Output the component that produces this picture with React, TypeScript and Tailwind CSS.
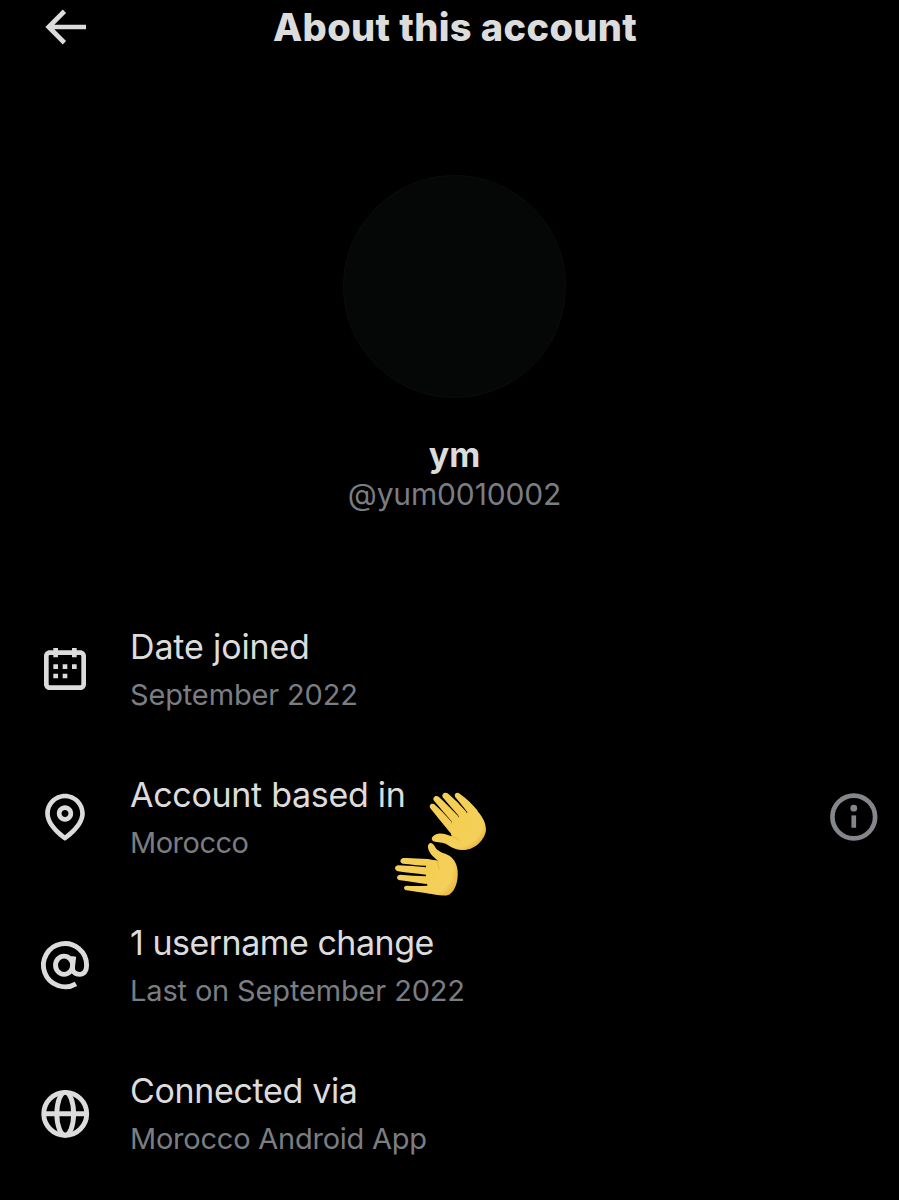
import type { ReactNode } from 'react'

type Row = {
  title: string
  detail: string
  icon: ReactNode
  titleClass: string
  detailClass: string
  info?: boolean
}

const rows: Row[] = [
  {
    title: 'Date joined',
    detail: 'September 2022',
    icon: <CalendarIcon />,
    titleClass: 'tracking-[-0.15px]',
    detailClass: 'tracking-[-0.15px]',
  },
  {
    title: 'Account based in',
    detail: 'Morocco',
    icon: <PinIcon />,
    titleClass: 'tracking-[-0.3px]',
    detailClass: 'tracking-[-0.5px]',
    info: true,
  },
  {
    title: '1 username change',
    detail: 'Last on September 2022',
    icon: <AtIcon />,
    titleClass: 'tracking-[-0.5px]',
    detailClass: 'tracking-[-0.15px]',
  },
  {
    title: 'Connected via',
    detail: 'Morocco Android App',
    icon: <GlobeIcon />,
    titleClass: 'tracking-[-0.35px]',
    detailClass: 'tracking-[-0.23px]',
  },
]

function CalendarIcon() {
  return (
    <svg viewBox="0 0 24 24" className="size-14" fill="currentColor">
      <path d="M7 4V3h2v1h6V3h2v1h1.5C19.89 4 21 5.12 21 6.5v12c0 1.38-1.11 2.5-2.5 2.5h-13C4.12 21 3 19.88 3 18.5v-12C3 5.12 4.12 4 5.5 4H7zm0 2H5.5c-.27 0-.5.22-.5.5v12c0 .28.23.5.5.5h13c.28 0 .5-.22.5-.5v-12c0-.28-.22-.5-.5-.5H17v1h-2V6H9v1H7V6zm0 6h2v-2H7v2zm0 4h2v-2H7v2zm4-4h2v-2h-2v2zm0 4h2v-2h-2v2zm4-4h2v-2h-2v2z" />
    </svg>
  )
}

function PinIcon() {
  return (
    <svg viewBox="0 0 24 24" className="size-14" fill="currentColor">
      <path d="M12 7c-1.93 0-3.5 1.57-3.5 3.5S10.07 14 12 14s3.5-1.57 3.5-3.5S13.93 7 12 7zm0 5c-.827 0-1.5-.673-1.5-1.5S11.173 9 12 9s1.5.673 1.5 1.5S12.827 12 12 12zm0-10c-4.687 0-8.5 3.813-8.5 8.5 0 5.967 7.621 11.116 7.945 11.332l.555.37.555-.37c.324-.216 7.945-5.365 7.945-11.332C20.5 5.813 16.687 2 12 2zm0 17.77c-1.665-1.241-6.5-5.196-6.5-9.27C5.5 6.916 8.416 4 12 4s6.5 2.916 6.5 6.5c0 4.073-4.835 8.028-6.5 9.27z" />
    </svg>
  )
}

function AtIcon() {
  return (
    <svg viewBox="0 0 24 24" className="size-14" fill="none" stroke="currentColor" strokeWidth="2.1">
      <path d="M16.7 20.05A9.25 9.25 0 1 1 21.25 12.1c0 2.4-1 3.9-2.9 3.9-2.3 0-3.4-1.3-3.1-3.5l.5-4.2" />
      <ellipse cx="11.6" cy="12.1" rx="3.65" ry="3.9" />
    </svg>
  )
}

function GlobeIcon() {
  return (
    <svg viewBox="0 0 24 24" className="size-14" fill="none" stroke="currentColor" strokeWidth="2.1">
      <circle cx="12.1" cy="12.35" r="9.2" />
      <ellipse cx="12.1" cy="12.35" rx="3.6" ry="9.2" />
      <path d="M2.9 12.35h18.4" />
    </svg>
  )
}

function InfoIcon() {
  return (
    <svg viewBox="0 0 24 24" className="size-14" fill="none" stroke="currentColor" strokeWidth="2">
      <circle cx="11.9" cy="12" r="9.15" />
      <circle cx="11.9" cy="8.2" r="1.45" fill="currentColor" stroke="none" />
      <path d="M11.9 11.3v5.3" />
    </svg>
  )
}

function WavingHands() {
  return (
    <svg viewBox="0 0 360 390" className="absolute top-[780px] left-[380px] h-[130px] w-[120px]">
      <defs>
        <radialGradient id="upper" gradientUnits="userSpaceOnUse" cx="225" cy="115" r="115">
          <stop offset="0" stopColor="#f4ce50" />
          <stop offset="0.75" stopColor="#f5d05a" />
          <stop offset="1" stopColor="#dfa436" />
        </radialGradient>
        <radialGradient id="lower" gradientUnits="userSpaceOnUse" cx="135" cy="265" r="125">
          <stop offset="0" stopColor="#f4ce50" />
          <stop offset="0.65" stopColor="#f5d05a" />
          <stop offset="1" stopColor="#dfa436" />
        </radialGradient>
      </defs>
      {/* Upper hand: fingers, then palm with thumb */}
      <g fill="url(#upper)">
        <path d="M151 85C146 76 154 68 163 73C180 89 198 107 213 124L222 175L212 160C193 137 168 106 151 85Z" />
        <path d="M161 61C157 51 168 44 176 50C196 69 217 89 235 109L228 145L212 121C195 101 177 81 161 61Z" />
        <path d="M188 52C184 42 194 35 203 40C223 57 242 76 260 97L248 132L234 105C219 88 203 70 188 52Z" />
        <path d="M225 50C222 41 231 35 239 41C259 55 279 74 293 92L280 128L260 94C249 79 237 65 225 50Z" />
        <path d="M214 127L236 111L260 99L286 86C304 105 318 125 318 150C316 176 288 208 253 210C229 210 215 203 202 194C190 186 172 189 160 184C149 176 159 164 174 161C190 159 204 165 215 169C211 155 210 142 214 127Z" />
      </g>
      <path d="M217 168c6 5 14 6 22 14" fill="none" stroke="#e6b544" strokeWidth="3" />
      {/* Lower hand */}
      <g fill="url(#lower)">
        <path d="M71 234C92 233 119 236 143 237L176 243L160 258L138 257C116 256 92 253 69 251C58 249 59 235 71 234Z" />
        <path d="M54 256C82 257 110 260 138 262L162 270L138 284C109 281 80 278 54 274C42 271 42 258 54 256Z" />
        <path d="M60 284C86 286 112 288 138 289L162 299L138 312C110 308 84 304 60 301C48 299 48 286 60 284Z" />
        <path d="M80 317C100 318 120 318 141 317L162 325L150 341C126 338 101 334 79 331C69 328 70 318 80 317Z" />
        <path d="M139 240L175 242C160 232 142 214 144 197C148 184 159 189 164 199C171 214 187 218 202 224C218 231 231 247 233 273C235 303 226 334 207 344C191 350 165 344 143 339L142 317L138 290L138 262Z" />
      </g>
      <path d="M174 243c-4 10 4 15 3 24" fill="none" stroke="#e6b544" strokeWidth="3" />
    </svg>
  )
}

export default function App() {
  return (
    <div className="relative h-[1200px] w-[899px] overflow-hidden bg-black font-['Inter',sans-serif] text-[#dcdcdc]">
      {/* Header */}
      <header className="flex h-[54px] items-center">
        <svg viewBox="0 0 24 24" className="ml-[37px] size-14" fill="currentColor">
          <path d="M7.414 13l5.043 5.04-1.414 1.42L3.586 12l7.457-7.46 1.414 1.42L7.414 11H21v2H7.414z" />
        </svg>
        <h1 className="ml-[180px] text-[38px] leading-[40px] font-extrabold tracking-[0.37px] whitespace-nowrap">
          About this account
        </h1>
      </header>

      {/* Profile */}
      <section className="ml-[10px] flex flex-col items-center pt-[121px]">
        <div className="size-[223px] rounded-full border border-[#0b0d0c] bg-[#050706]" />
        <h2 className="mt-[37px] text-[34px] leading-[40px] font-bold">ym</h2>
        <p className="text-[30px] leading-[38px] tracking-[-0.15px] text-[#7a7d82]">@yum0010002</p>
      </section>

      {/* Details */}
      <ul className="mt-[108px]">
        {rows.map((row) => (
          <li key={row.title} className="flex h-[148px] items-start pr-[17px] pl-[37px]">
            <div className="mt-5">{row.icon}</div>
            <div className="ml-[37px] flex-1 whitespace-nowrap">
              <p className={`text-[34px] leading-[51px] ${row.titleClass}`}>{row.title}</p>
              <p className={`text-[29px] leading-[46px] text-[#7a7d82] ${row.detailClass}`}>{row.detail}</p>
            </div>
            {row.info && (
              <div className="mt-5 text-[#83868b]">
                <InfoIcon />
              </div>
            )}
          </li>
        ))}
      </ul>

      <WavingHands />
    </div>
  )
}
